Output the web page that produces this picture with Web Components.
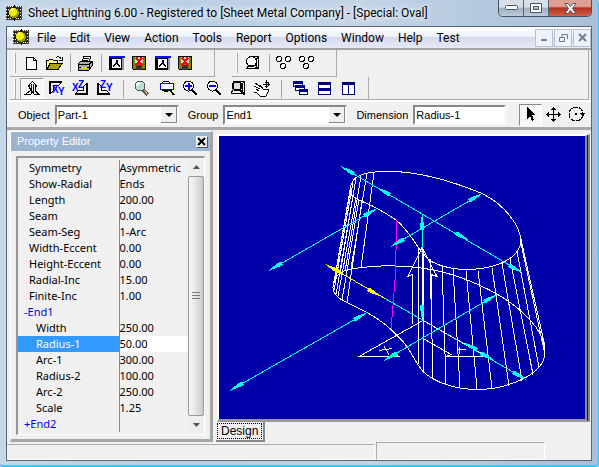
<!DOCTYPE html>
<html lang="en">
<head>
<meta charset="utf-8">
<title>Sheet Lightning 6.00</title>
<style>
  html, body { margin: 0; }
  body { font: 11px/16px "Noto Sans", "Open Sans", sans-serif; color: #000; background: #b7cbe0; }
</style>
</head>
<body>
<app-window>
  <title-bar slot="title">Sheet Lightning 6.00 - Registered to [Sheet Metal Company] - [Special: Oval]</title-bar>
  <menu-bar slot="menu" items="File,Edit,View,Action,Tools,Report,Options,Window,Help,Test"></menu-bar>
  <tool-area slot="tools">
    <tool-strip slot="top" icons="page,open,|,printer,|,axisWin,disk,axisWin,disk"></tool-strip>
    <tool-strip slot="top" icons="solid,|,dots,dots"></tool-strip>
    <tool-strip slot="bottom" wide icons="iso!,planXY,planXZ,planZY,|,zoom,zoomRect,zoomIn,zoomOut,zoomAll,pan,|,cascade,tileH,tileV"></tool-strip>
  </tool-area>
  <field-bar slot="fields"></field-bar>
  <property-editor slot="side"></property-editor>
  <design-view slot="main"></design-view>
  <status-bar slot="status"></status-bar>
</app-window>

<script>
const define = (name, html, setup) => {
  const template = document.createElement('template');
  template.innerHTML = `<style>*{box-sizing:border-box}button{font:inherit;color:inherit;padding:0;border:0;background:none;display:grid;place-items:center}svg{display:block;overflow:visible}</style>` + html;
  customElements.define(name, class extends HTMLElement {
    constructor() {
      super();
      this.attachShadow({ mode: 'open' }).append(template.content.cloneNode(true));
    }
    connectedCallback() {
      if (setup && !this.ready) { this.ready = true; setup(this, this.shadowRoot); }
    }
  });
};

const lens = extra => `<circle cx="6.5" cy="6" r="5" fill="#fff" stroke="#000"/><path d="M10 10l5 5" stroke="#000" stroke-width="2"/>${extra}`;
const letter = (x, y, c) => `<text x="${x}" y="${y}" font-family="Liberation Sans, sans-serif" font-size="10" font-weight="bold" fill="#00f" stroke="none">${c}</text>`;
const ICONS = {
  logo: `<rect x="0" y="1" width="16" height="14" fill="#3b3b32"/><path d="M0 1.500H16M0 4.500H16M0 7.500H16M0 10.500H16M0 13.500H16" stroke="#fff" stroke-dasharray="1 1"/><path d="M1 3H16M1 6H16M1 9H16M1 12H16" stroke="#000" stroke-dasharray="2 1"/><circle cx="8" cy="8" r="6" fill="#222200"/><circle cx="8" cy="8" r="5" fill="#9c9c00"/><circle cx="7" cy="7" r="4" fill="#f2ee00"/><circle cx="6" cy="5" r="1" fill="#fff"/><path d="M8 0v2M8 14v2" stroke="#000"/>`,
  page: `<path d="M3.500 2.500h7l3 3v9h-10z" fill="#fff" stroke="#000"/><path d="M10.500 2.500v3h3" stroke="#000"/>`,
  open: `<path d="M.5 14V5.500h2l1-1h3l1 1h4V8" fill="#ffff80" stroke="#000"/><path d="M1 14.500l3-6h12l-4 6z" fill="#a8a400" stroke="#000"/><path d="M10 3q3-3 5 1M16 2v3h-3" stroke="#000"/>`,
  printer: `<path d="M5 7l2-6h7l-2 6z" fill="#fff" stroke="#000"/><path d="M7 3h5M6 5h5" stroke="#000"/><path d="M1 9l3-3h11v5l-3 4H1z" fill="#aaa" stroke="#000"/><path d="M1 9.500h11l3-3M12 9v6M1 12h11" stroke="#000"/><path d="M4 13h6" stroke="#dddd00" stroke-width="2"/>`,
  axisWin: `<path d="M1 3H14V15H1z" fill="#000"/><path d="M1 1H17V3H1z" fill="#0a10ff"/><path d="M4 4H13V13H4z" fill="#fff"/><path d="M7.500 5h2v4h-2z" fill="#000"/><path d="M8 8.500L5 11.500M9 8.500l3 3" stroke="#000" stroke-width="2"/><path d="M14 3h2v12h-2z" fill="#999"/>`,
  disk: `<path d="M1.500 1.500h13v13h-12l-1-1z" fill="#808000" stroke="#000"/><path d="M4 2h8v6H4z" fill="#ddd"/><path d="M5 10h6v5H5z" fill="#333"/><path d="M5 3l6 7M11 3l-6 7M5 10h2M9 10h2M5 3h2M9 3h2" stroke="#f00" stroke-width="2"/>`,
  solid: `<circle cx="6.500" cy="6.500" r="5" fill="#fff" stroke="#000"/><path d="M4.500 1.500h9v12H1M13.500 2l-2 2v8l-2 2M2 13l2-3h6l3 3" stroke="#000"/>`,
  dots: `<g fill="#fff" stroke="#000"><circle cx="3" cy="4" r="2.500"/><circle cx="12" cy="4" r="2.500"/><circle cx="7" cy="11" r="2.500"/></g>`,
  iso: `<path d="M8.500 13V4" stroke="#000" stroke-width="3"/><path d="M8.500 4v7" stroke="#fff"/><path d="M4 6.500l4.500-5 4.500 5M5.500 8.500V6M11.500 8.500V6" stroke="#000"/><path d="M6 8v3l-4 3h5l1.500-2L10 14h5l-4-3V8" stroke="#000"/>`,
  planXY: `<path d="M2 14V2h12" stroke="#000" stroke-width="2"/><path d="M5.500 10V5.500h4M2 14l4-4M14 2l-4 4" stroke="#000"/>${letter(4, 13, 'X')}${letter(10, 15, 'Y')}`,
  planXZ: `<path d="M15 3v11H3" stroke="#000" stroke-width="2"/><path d="M11.500 7v3.500H7M15 3l-4 4M3 14l4-4" stroke="#000"/>${letter(0, 11, 'X')}${letter(6, 8, 'Z')}`,
  planZY: `<path d="M2 3v11h12" stroke="#000" stroke-width="2"/><path d="M5.500 7v3.500H10M2 3l4 4M14 14l-4-4" stroke="#000"/>${letter(4, 8, 'Z')}${letter(10, 11, 'Y')}`,
  zoom: `<path d="M9 10l5 5" stroke="#555" stroke-width="3"/><path d="M10 10l4 5" stroke="#d8b060"/><circle cx="6" cy="6" r="5" fill="#bfdcd8" stroke="#555"/><path d="M3 6q0-3 3-3" stroke="#fff" stroke-width="2"/>`,
  zoomRect: `<circle cx="8" cy="6" r="5" fill="#fff" stroke="#000"/><path d="M12 10l4 5" stroke="#000" stroke-width="2"/><path d="M2 3h13v6H2z" fill="#fff" stroke="#00f" stroke-width="1"/><path d="M4 10q4 3 8 0" stroke="#000"/>`,
  zoomIn: lens(`<path d="M3 6h7M6.500 3v7" stroke="#00f" stroke-width="2"/>`),
  zoomOut: lens(`<path d="M3 6h7" stroke="#00f" stroke-width="2"/>`),
  zoomAll: `<path d="M2.500 1.500h12v12H1M1 13l3-4M14 2l-2 2v8" stroke="#000"/><circle cx="7" cy="6" r="4.500" fill="#ddd" stroke="#000" stroke-width="2"/><path d="M10 10l5 5" stroke="#000" stroke-width="2"/>`,
  pan: `<path d="M1 6l3-3 3 2 2 3h4v4l-2 4H6l-5-4z" fill="#fff"/><path d="M0 12l3 1 3 3h6l2-4V9H9L6 5M1 3l6 4M0 6l6 3M2 9l3 2" stroke="#000"/><path d="M12.500 0v8M9 4h7M11 2h3M11 6h3M14 2v4" stroke="#000"/>`,
  cascade: `<g fill="#fff" stroke="#000080"><path d="M1.500 1.500h9v5h-9zM3.500 5.500h9v5h-9zM7.500 9.500h8v5h-8z"/></g><path d="M1 2.500h10M3 6.500h10M7 10.500h9" stroke="#000080" stroke-width="2"/>`,
  tileH: `<path d="M2.500 2.500h12v12h-12zM2 8.500h13" fill="#fff" stroke="#000080"/><path d="M2 3h13M2 9.500h13" stroke="#000080" stroke-width="3"/>`,
  tileV: `<path d="M2.500 2.500h12v12h-12zM8.500 2v13" fill="#fff" stroke="#000080"/><path d="M2 3h13" stroke="#000080" stroke-width="3"/>`,
  arrow: `<path d="M5 1v12l3-3 2 5 2-1-2-5h4z" fill="#000"/>`,
  move: `<path d="M8.500 2v13M2 8.500h13" stroke="#000"/><path d="M8.500 1l3 3h-6zM8.500 16l3-3h-6zM1 8.500l3-3v6zM16 8.500l-3-3v6z" fill="#000"/>`,
  rotate: `<circle cx="8" cy="8" r="7" stroke="#000" stroke-dasharray="5 1"/><path d="M7 7h2v2H7zM12 7h5l-2 4z" fill="#000"/>`
};
const icon = name => `<svg width="17" height="17" viewBox="0 0 17 17" fill="none" shape-rendering="crispEdges" aria-hidden="true">${ICONS[name]}</svg>`;

define('app-window', `
<style>
  :host { display: flex; flex-direction: column; min-height: 100vh; box-sizing: border-box; padding: 0 6px 4px;
    background: linear-gradient(90deg, #c5d7e8, #b9cfe4 30%, #c3d4e6 60%, #a8bfd6);
    border-right: 1px solid #2bc4ee; border-bottom: 2px solid #35c8f4; border-radius: 5px 5px 4px 4px; }
  .frame { flex: 1; display: flex; flex-direction: column; background: #f0f0f0; border: 1px solid #5a6572; }
  .work { flex: 1; display: grid; grid-template-columns: 206px 1fr; padding-top: 1px; }
</style>
<slot name="title"></slot>
<div class="frame">
  <slot name="menu"></slot><slot name="tools"></slot><slot name="fields"></slot>
  <main class="work"><slot name="side"></slot><slot name="main"></slot></main>
  <slot name="status"></slot>
</div>`);

define('title-bar', `
<style>
  :host { display: flex; height: 26px; font: 12px/26px Roboto, sans-serif; gap: 5px; }
  .mark { padding-top: 5px; }
  .text { flex: 1; white-space: nowrap; text-shadow: 0 0 5px #fff, 0 0 8px #fff; }
  .controls { display: flex; height: 17px; border: 1px solid #445261; border-top: 0; border-radius: 0 0 5px 5px; overflow: hidden; }
  button { width: 25px; height: 16px; border-right: 1px solid #55626f; background: linear-gradient(#d7dfe8 45%, #9eafc1 50%, #bccbdb); }
  button.close { width: 42px; border: 0; background: linear-gradient(#dda093 40%, #b53222 50%, #d3604a); }
</style>
<span class="mark">${icon('logo')}</span><span class="text"><slot></slot></span>
<span class="controls">
  <button aria-label="Minimize"><svg width="13" height="6"><rect x=".5" y=".5" width="12" height="4" rx="1" fill="#fff" stroke="#4b5663"/></svg></button>
  <button aria-label="Maximize"><svg width="12" height="10"><path d="M.5.5h11v9H.5zM3.500 3.500h5v3h-5z" fill="#fff" stroke="#4b5663" fill-rule="evenodd"/></svg></button>
  <button class="close" aria-label="Close"><svg width="13" height="11"><path d="M1 .5h3l2.500 3L9 .5h3L8.500 5.500l3.500 5H9L6.500 7.500 4 10.500H1l3.500-5z" fill="#fff" stroke="#4b5663"/></svg></button>
</span>`);

define('menu-bar', `
<style>
  :host { display: flex; align-items: center; height: 21px; padding-left: 6px; border-bottom: 2px solid #a3a3a3; background: linear-gradient(#fff, #eef1fa 45%, #d5daee 50%, #e6eaf6); font: 12px/18px Roboto, sans-serif; }
  nav { flex: 1; display: flex; }
  nav button { padding: 0 7px; }
  .mdi { display: flex; gap: 1px; }
  .mdi button { width: 18px; height: 18px; border: 1px solid #b3c3d5; background: #eef2f9; }
</style>
${icon('logo')}<nav></nav>
<span class="mdi">
  <button aria-label="Minimize document"><svg width="9" height="9"><path d="M1 7h6" stroke="#6d7f91" stroke-width="2"/></svg></button>
  <button aria-label="Restore document"><svg width="9" height="9"><path d="M3 1.500h5.500V6M.5 4.500h5v4h-5zM3 1v3" fill="none" stroke="#6d7f91"/></svg></button>
  <button aria-label="Close document"><svg width="9" height="9"><path d="M1 1l7 7M8 1L1 8" stroke="#6d7f91" stroke-width="2"/></svg></button>
</span>`, (host, root) => {
  root.querySelector('nav').innerHTML = host.getAttribute('items').split(',').map(t => `<button>${t}</button>`).join('');
});

define('tool-area', `
<style>
  :host { display: block; border-right: 1px solid #aaa; border-bottom: 1px solid #aaa; margin: 0 2px 0 3px; }
  .row { display: flex; gap: 17px; }
</style>
<div class="row"><slot name="top"></slot></div><div class="row"><slot name="bottom"></slot></div>`);

define('tool-strip', `
<style>
  :host { display: flex; align-items: center; height: 27px; box-sizing: border-box; padding: 0 17px 0 4px; border: 1px solid #aaa; border-width: 0 1px 1px 0; }
  :host([wide]) { height: 22px; padding: 1px 8px 0 4px; border-bottom: 0; }
  i { width: 2px; height: 20px; border-left: 1px solid #fff; border-right: 1px solid #aaa; margin-right: 4px; }
  button { width: 23px; height: 23px; }
  :host([wide]) button { width: 24px; height: 21px; }
  button.on { background: #f8f8f8; border: 1px solid; border-color: #999 #fff #fff #999; }
  hr { width: 1px; height: 18px; border: 0; background: #a5a5a5; margin: 0 3px 0 4px; }
  :host([wide]) hr { margin: 0 6px 0 7px; }
</style><i></i>`, (host, root) => {
  for (const name of host.getAttribute('icons').split(',')) {
    if (name === '|') { root.append(document.createElement('hr')); continue; }
    const b = document.createElement('button');
    const key = name.replace('!', '');
    b.setAttribute('aria-label', key);
    if (key !== name) { b.className = 'on'; b.setAttribute('aria-pressed', 'true'); }
    b.innerHTML = icon(key);
    root.append(b);
  }
});

define('field-bar', `
<style>
  :host { display: flex; align-items: center; gap: 5px; height: 25px; padding: 0 3px 0 11px; border-top: 2px solid #fff; border-bottom: 3px solid #a9a9a9; font-family: "Liberation Sans", sans-serif; }
  .combo { display: grid; width: 124px; margin-right: 4px; }
  .combo > * { grid-area: 1 / 1; }
  select, input { font: inherit; height: 20px; padding: 0 1px; border: 2px solid; border-color: #888 #f8f8f8 #f8f8f8 #888; border-radius: 0; background: #fff; appearance: none; color: #000; }
  .combo svg { justify-self: end; align-self: center; margin-right: 2px; pointer-events: none; }
  input { flex: 1; min-width: 0; }
  .tools { display: flex; margin-left: 8px; }
  button { width: 23px; height: 22px; }
  button.on { background: #f8f8f8; border: 1px solid; border-color: #888 #fff #fff #888; }
</style>
<label for="o">Object</label><span class="combo"><select id="o"><option>Part-1</option></select><svg width="16" height="16"><path d="M0 0h16v16H0z" fill="#888"/><path d="M0 0h15v15H0z" fill="#f0f0f0"/><path d="M4 6h8l-4 4z"/></svg></span>
<label for="g">Group</label><span class="combo"><select id="g"><option>End1</option></select><svg width="16" height="16"><path d="M0 0h16v16H0z" fill="#888"/><path d="M0 0h15v15H0z" fill="#f0f0f0"/><path d="M4 6h8l-4 4z"/></svg></span>
<label for="d">Dimension</label><input id="d" value="Radius-1">
<span class="tools"><button class="on" aria-label="Select" aria-pressed="true">${icon('arrow')}</button><button aria-label="Move">${icon('move')}</button><button aria-label="Rotate">${icon('rotate')}</button></span>`);

define('property-editor', `
<style>
  :host { display: flex; flex-direction: column; margin-left: 3px; border: 1px solid #fff; border-right: 3px solid #a5a5a5; border-bottom: 3px solid #a5a5a5; }
  header { display: flex; align-items: center; height: 19px; padding: 0 3px 0 6px; margin-bottom: 5px; background: #99b4d1; color: #fff; font: 11px/19px "Liberation Sans", sans-serif; }
  header span { flex: 1; }
  header button { width: 11px; height: 11px; background: #f0f0f0; box-shadow: 1px 1px #555; }
  .list { flex: 1; display: flex; margin: 0 5px 4px; padding-top: 2px; border: 2px solid; border-color: #969696 #fff #fff #969696; border-bottom-width: 1px; border-right-width: 1px; }
  table { flex: 1; border-collapse: collapse; align-self: start; table-layout: fixed; min-width: 0; }
  th { width: 101px; padding: 0 0 0 11px; font-weight: normal; text-align: left; height: 16px; line-height: 16px; border-right: 1px solid #888; white-space: nowrap; }
  td { padding: 0; height: 16px; line-height: 16px; }
  .sub th { padding-left: 18px; }
  .head th { padding-left: 6px; color: #00f; }
  .sel th { background: #3399ff; color: #fff; }
  .sel td { background: #fff; }
  input { display: block; width: 100%; height: 16px; font: inherit; border: 0; padding: 0; background: #fff; outline: 0; }
  .scroll { width: 16px; display: flex; flex-direction: column; margin-top: -2px; background: #eee; }
  .scroll button { height: 18px; width: 16px; }
  .thumb { flex: 1; border: 1px solid #999; border-radius: 2px; background: linear-gradient(90deg, #f8f8f8, #e5e5e8 50%, #c8c9cd); display: grid; place-items: center; }
</style>
<header><span>Property Editor</span><button aria-label="Close property editor"><svg width="7" height="7"><path d="M0 0l7 7M7 0L0 7" stroke="#000" stroke-width="2"/></svg></button></header>
<div class="list"><table><tbody></tbody></table>
<div class="scroll"><button aria-label="Scroll up"><svg width="7" height="4"><path d="M0 4l3.500-4L7 4z" fill="#555"/></svg></button><div class="thumb"><svg width="8" height="8"><path d="M0 .5h8M0 3.500h8M0 6.500h8" stroke="#777"/></svg></div><button aria-label="Scroll down"><svg width="7" height="4"><path d="M0 0l3.500 4L7 0z" fill="#555"/></svg></button></div></div>`, (host, root) => {
  const rows = [['Symmetry', 'Asymmetric'], ['Show-Radial', 'Ends'], ['Length', '200.00'], ['Seam', '0.00'], ['Seam-Seg', '1-Arc'], ['Width-Eccent', '0.00'], ['Height-Eccent', '0.00'], ['Radial-Inc', '15.00'], ['Finite-Inc', '1.00'], ['-End1', '', 'head'], ['Width', '250.00', 'sub'], ['Radius-1', '50.00', 'sub sel'], ['Arc-1', '300.00', 'sub'], ['Radius-2', '100.00', 'sub'], ['Arc-2', '250.00', 'sub'], ['Scale', '1.25', 'sub'], ['+End2', '', 'head']];
  root.querySelector('tbody').innerHTML = rows.map(([k, v, c = '']) =>
    `<tr class="${c}"><th scope="row">${k}</th><td>${c.includes('sel') ? `<input aria-label="${k}" value="${v}">` : v}</td></tr>`).join('');
});

/* Dimension arrow heads: tip position, then the direction that the head points away from. */
const head = (x, y, dx, dy, color = '#0ff') => {
  const n = Math.hypot(dx, dy), ux = dx / n, uy = dy / n;
  const p = (a, b) => `${x + ux * a - uy * b},${y + uy * a + ux * b}`;
  return `<polygon fill="${color}" points="${p(1, 0)} ${p(4, 1)} ${p(12, 2)} ${p(15, 2)} ${p(15, -2)} ${p(12, -2)} ${p(4, -1)}"/>`;
};
const rulings = [[442,265,446,383],[453,268,460,387],[466,270,477,388],[478,270,492,388],[492,267,509,385],[502,263,522,380],[510,258,533,374],[517,251,539,367],[521,243,545,354],[521,239,545,346],[430,258,433,378],[423,252,423,371],[418,247,418,363],
  [374,172,361,267],[367,173,351,268],[361,176,345,271],[356,178,340,274],[353,182,336,278],[351,186,334,283],[350,190,333,287],[351,193,334,290],[353,195,336,294],[356,197,338,296],[359,199,342,300],[362,200,347,302]];

define('design-view', `
<style>
  :host { display: flex; flex-direction: column; min-width: 0; }
  .canvas { flex: 1; margin: 3px 1px 0 4px; background: #0000a8; border: 2px solid #fff; border-right: 5px double #888; border-bottom: 3px solid #999; display: grid; min-height: 0; }
  .canvas svg { width: 100%; height: 100%; }
  button { align-self: start; margin: 0 0 0 3px; padding: 1px; background: #f0f0f0; border-right: 2px solid #888; border-bottom: 2px solid #888; font: 12px "Liberation Sans", sans-serif; }
  button span { padding: 0 3px; line-height: 14px; border: 1px dotted #000; }
</style>
<div class="canvas"><svg viewBox="219 136 366 282" fill="none" stroke-width="1" shape-rendering="crispEdges" role="img" aria-label="Wireframe of the oval transition">
<g stroke="#fff">
<path d="${rulings.map(r => `M${r[0]} ${r[1]}L${r[2]} ${r[3]}`).join('')}"/>
<path d="M350 190C351 178 357 172 382 171C405 170 436 174 482 193C505 204 521 226 521 242C517 261 491 269 465 269C450 269 436 264 430 260C419 252 417 241 400 223C394 217 384 212 377 208C366 201 350 199 350 190Z"/>
<path d="M333 287C333 270 347 268 372 266C400 264 440 266 480 285C505 296 545 322 545 352C544 377 501 389 478 389C455 389 435 382 423 371C412 358 411 348 400 338C391 328 378 318 367 312L347 302C340 299 333 295 333 287Z"/>
<path d="M423 338L451 354L446 356H487L423 320L359 356H399L395 353M412 323V274L408 276L422 247L437 276L431 274V319"/>
<path d="M379 350L392 348M384 346L389 354M457 349H466M459 346V353"/>
<path d="M422.500 248V319" stroke-width="2"/></g>
<path d="M397 220L395 280L391 329" stroke="#f0f"/>
<path d="M341 166L522 272M269 270L377 208M391 246L482 193M422.500 213V228M422.500 228V247M230 390L367 312M384 360L497 294M385 298L526 379" stroke="#0ff"/>
<path d="M423 320L487 356" stroke="#fff" stroke-dasharray="7 3"/>
<path d="M326 264L385 298" stroke="#ff0"/>
${head(341,166,7,4)}${head(377,187,7,4)}${head(469,240,-7,-4)}${head(522,272,-7,-4)}${head(269,270,7,-4)}${head(377,208,-7,4)}${head(391,246,7,-4)}${head(482,193,-7,4)}${head(422,214,0,1)}${head(422,319,0,-1)}${head(230,390,7,-4)}${head(367,312,-7,4)}${head(384,360,7,-4)}${head(497,294,-7,4)}${head(464,342,7,4)}${head(494,360,-7,-4)}${head(526,379,-7,-4)}${head(326,264,7,4,'#ff0')}${head(381,296,-7,-4,'#ff0')}
</svg></div>
<button>
<span>Design</span></button>`);

define('status-bar', `
<style>
  :host { display: flex; gap: 1px; height: 18px; align-items: end; }
  div { height: 16px; flex: 370; border: 1px solid; border-color: #aaa #fff #fff #aaa; border-left: 0; }
  .mid { flex: 168; height: 18px; border-left: 1px solid #aaa; }
  .end { flex: 45; border: 0; }
</style>
<div></div><div class="mid"></div><div class="end"></div>`);
</script>
</body>
</html>
